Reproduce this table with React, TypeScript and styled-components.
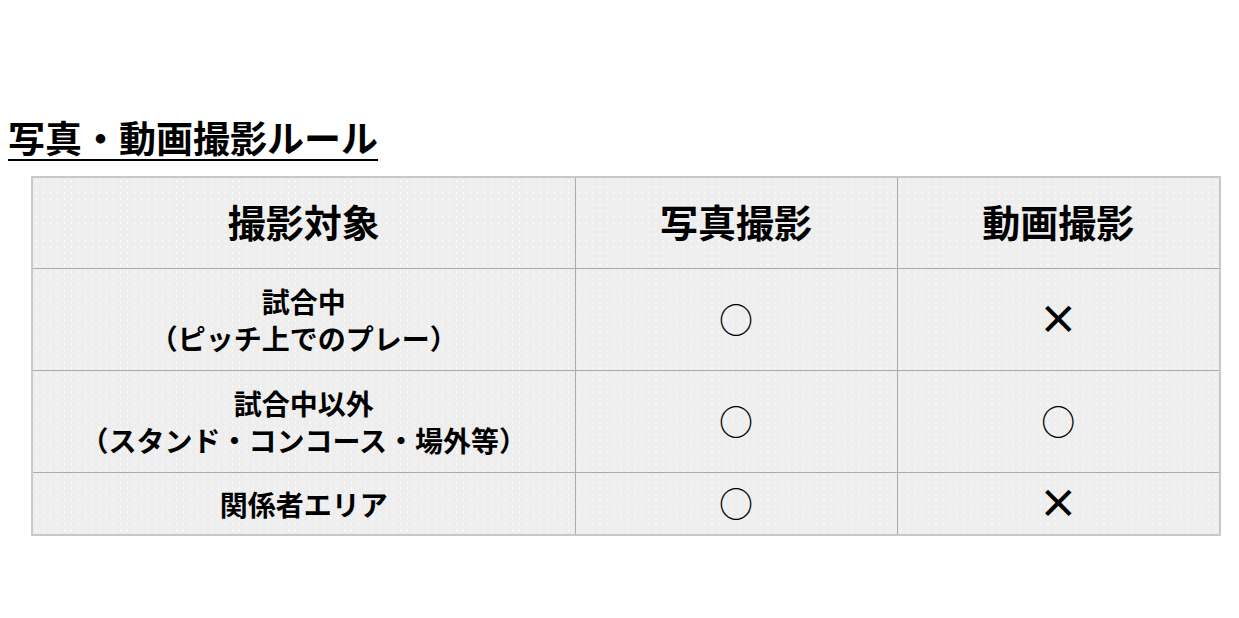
import React from "react";
import styled, { createGlobalStyle } from "styled-components";

const Global = createGlobalStyle`
  html, body { margin: 0; padding: 0; background: #fff; }
  body { font-family: "Noto Sans CJK JP", "Noto Sans", sans-serif; color: #000; }
`;

const Page = styled.div`
  padding: 115px 20px 0 8px;
`;

const Title = styled.h2`
  display: inline-block;
  margin: 0;
  font-size: 37px;
  line-height: 44px;
  font-weight: 700;
  border-bottom: 2px solid #000;
  padding-bottom: 0;
`;

const TableWrap = styled.div`
  padding: 15px 0 0 23px;
`;

const Table = styled.table`
  width: 1188px;
  border-collapse: collapse;
  table-layout: fixed;
  border: 2px solid #c8c8c8;
`;

const Cell = styled.td<{ $h: number; $head?: boolean; $lh?: number }>`
  height: ${(p) => p.$h}px;
  padding: 0 0 ${(p) => (p.$head ? "4px" : "0")};
  text-align: center;
  vertical-align: middle;
  border: 1px solid #ababab;
  background-color: #eeeeee;
  background-image: radial-gradient(circle, rgba(255,255,255,0.95) 0.7px, transparent 1px);
  background-size: 7px 6px;
  font-size: ${(p) => (p.$head ? "38px" : "28px")};
  line-height: ${(p) => (p.$head ? "46px" : `${p.$lh ?? 34}px`)};
  font-weight: 700;
`;

const Line = styled.div`
  white-space: nowrap;
`;

const Mark = styled.span<{ $kind: "o" | "x" }>`
  display: inline-block;
  font-weight: ${(p) => (p.$kind === "o" ? 400 : 700)};
  font-size: ${(p) => (p.$kind === "o" ? "34px" : "40px")};
  line-height: 34px;
`;

const rows = [
  { label: ["試合中", "（ピッチ上でのプレー）"], photo: "o", video: "x", h: 101, lh: 37 },
  { label: ["試合中以外", "（スタンド・コンコース・場外等）"], photo: "o", video: "o", h: 101, lh: 37 },
  { label: ["関係者エリア"], photo: "o", video: "x", h: 61, lh: 34 },
] as const;

const markChar = (k: "o" | "x") => (k === "o" ? "○" : "×");

export default function App() {
  return (
    <>
      <Global />
      <Page>
        <Title>写真・動画撮影ルール</Title>
        <TableWrap>
          <Table>
            <colgroup>
              <col style={{ width: 543 }} />
              <col style={{ width: 322 }} />
              <col style={{ width: 323 }} />
            </colgroup>
            <tbody>
              <tr>
                <Cell $h={86} $head>撮影対象</Cell>
                <Cell $h={86} $head>写真撮影</Cell>
                <Cell $h={86} $head>動画撮影</Cell>
              </tr>
              {rows.map((r, i) => (
                <tr key={i}>
                  <Cell $h={r.h} $lh={r.lh}>
                    {r.label.map((l, j) => (
                      <Line key={j}>{l}</Line>
                    ))}
                  </Cell>
                  <Cell $h={r.h}>
                    <Mark $kind={r.photo}>{markChar(r.photo)}</Mark>
                  </Cell>
                  <Cell $h={r.h}>
                    <Mark $kind={r.video}>{markChar(r.video)}</Mark>
                  </Cell>
                </tr>
              ))}
            </tbody>
          </Table>
        </TableWrap>
      </Page>
    </>
  );
}
